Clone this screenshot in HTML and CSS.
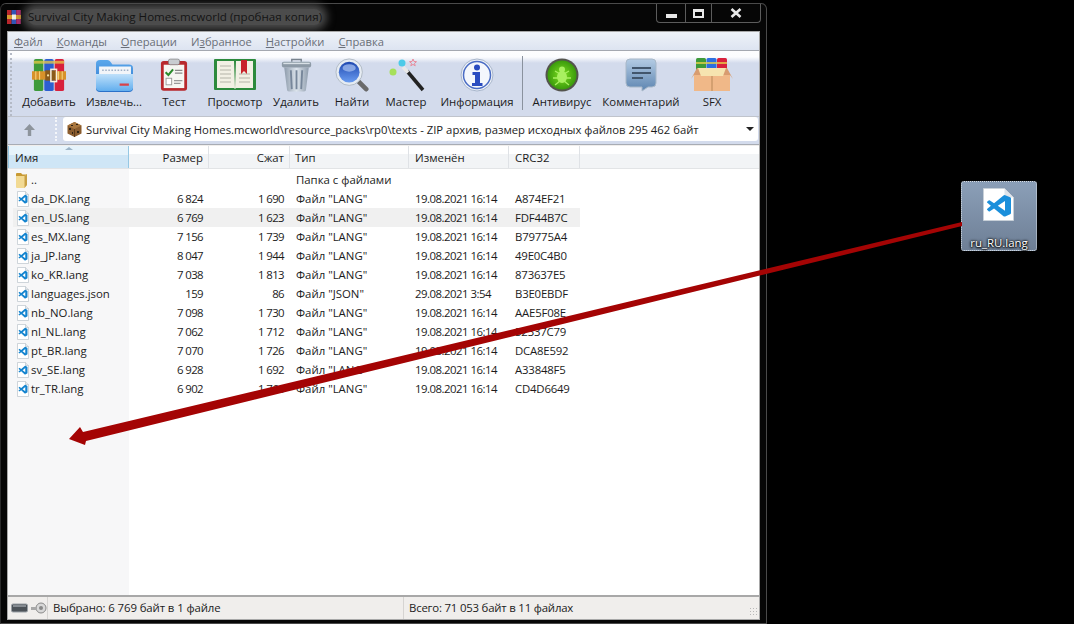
FILE: index.html
```html
<!DOCTYPE html>
<html lang="ru">
<head>
  <meta charset="UTF-8" />
  <title>Survival City Making Homes.mcworld</title>
  <link rel="stylesheet" href="styles.css">
</head>
<body>
  <svg width="0" height="0" class="defs">
    <defs>
      <linearGradient id="g-folder-back" x1="0" y1="0" x2="0" y2="1"><stop offset="0" stop-color="#5aa8ec"/><stop offset="1" stop-color="#2a70c8"/></linearGradient>
      <linearGradient id="g-folder-front" x1="0" y1="0" x2="0" y2="1"><stop offset="0" stop-color="#bfe0fa"/><stop offset="1" stop-color="#62aeee"/></linearGradient>
      <linearGradient id="g-lens" x1="0" y1="0" x2="0" y2="1"><stop offset="0" stop-color="#1f48b0"/><stop offset="1" stop-color="#6a9cf0"/></linearGradient>
      <linearGradient id="g-bubble" x1="0" y1="0" x2="0" y2="1"><stop offset="0" stop-color="#b4cce4"/><stop offset="1" stop-color="#5c84b0"/></linearGradient>
      <linearGradient id="g-trash" x1="0" y1="0" x2="1" y2="0"><stop offset="0" stop-color="#8e9cac"/><stop offset=".5" stop-color="#dce4ec"/><stop offset="1" stop-color="#8e9cac"/></linearGradient>
      <radialGradient id="g-virus"><stop offset="0" stop-color="#7ee020"/><stop offset="1" stop-color="#3a9a0c"/></radialGradient>
      <symbol id="vscode" viewBox="0 0 16 16">
        <path d="M2.500 .5h8L13.500 3.500v12h-11z" fill="#fff" stroke="#bcc4cc" stroke-width=".7"/>
        <path d="M10.500 .5v3h3" fill="#e4e8ec" stroke="#bcc4cc" stroke-width=".7"/>
        <path transform="translate(3.600 3.700) scale(.37)" d="M23.150 2.587 18.210.21a1.494 1.494 0 0 0-1.705.29l-9.460 8.630-4.120-3.128a.999.999 0 0 0-1.276.057L.327 7.261A1 1 0 0 0 .326 8.740L3.899 12 .326 15.260a1 1 0 0 0 .001 1.479L1.650 17.940a.999.999 0 0 0 1.276.057l4.120-3.128 9.460 8.630a1.492 1.492 0 0 0 1.704.29l4.942-2.377A1.500 1.500 0 0 0 24 20.060V3.939a1.500 1.500 0 0 0-.85-1.352zm-5.146 14.861L10.826 12l7.178-5.448v10.896z" fill="#1484cf"/>
      </symbol>
    </defs>
  </svg>

  <div class="window">
    <div class="titlebar">
      <svg class="app-icon" width="16" height="16" viewBox="0 0 16 16">
        <rect x="1" y="1" width="4.600" height="14" fill="#b8262c"/>
        <rect x="5.600" y="1" width="4.600" height="14" fill="#3156b8"/>
        <rect x="10.200" y="1" width="4.600" height="14" fill="#b02a6e"/>
        <rect x="1" y="6" width="14" height="4" fill="#d89a2e"/>
        <rect x="6" y="5.500" width="4" height="5" fill="#f4f0e0"/>
      </svg>
      <span class="title-text">Survival City Making Homes.mcworld (пробная копия)</span>
      <div class="caption-btns">
        <div class="cap-btn cap-min"><span class="min-glyph"></span></div>
        <div class="cap-btn cap-max"><span class="max-glyph"></span></div>
        <div class="cap-btn cap-close">
          <svg width="12" height="10" viewBox="0 0 12 10"><path d="M1.500 1l9 8M10.500 1l-9 8" stroke="#e8e8e8" stroke-width="2.600"/></svg>
        </div>
      </div>
    </div>

    <div class="client">
      <div class="menubar">
        <span><u>Ф</u>айл</span>
        <span><u>К</u>оманды</span>
        <span><u>О</u>перации</span>
        <span>И<u>з</u>бранное</span>
        <span><u>Н</u>астройки</span>
        <span><u>С</u>правка</span>
      </div>

      <div class="toolbar">
        <div class="tb-grip"></div>
        <div class="tool tool-add">
          <svg width="34" height="34" viewBox="0 0 36 36">
            <rect x="2" y="1" width="10" height="34" rx="2" fill="#3d9a3a"/>
            <rect x="13" y="1" width="10" height="34" rx="2" fill="#2c5fd0"/>
            <rect x="24" y="1" width="10" height="34" rx="2" fill="#d8203c"/>
            <rect x="2" y="3" width="32" height="3" fill="#e8c848" opacity=".75"/>
            <rect x="0" y="14" width="36" height="9" fill="#d8922a"/>
            <path d="M4 14v9M8 14v9M28 14v9M32 14v9" stroke="#f4cf7a" stroke-width="1.200"/>
            <rect x="14" y="13" width="11" height="11" fill="#8a5a1a"/>
            <rect x="20" y="12" width="6" height="13" fill="none" stroke="#f6f0e0" stroke-width="1.600"/>
            <circle cx="17" cy="18.500" r="1.200" fill="#f6e0a0"/>
          </svg>
          <span>Добавить</span>
        </div>
        <div class="tool tool-extract">
          <svg width="37" height="34" viewBox="0 0 36 36" preserveAspectRatio="none">
            <path d="M0 6q0-4 4-4h7q2 0 3 2l2 3h16q4 0 4 4v21q0 4-4 4H4q-4 0-4-4z" fill="url(#g-folder-back)"/>
            <rect x="3" y="9" width="31" height="9" fill="#f2f5f9"/>
            <path d="M6 13h26" stroke="#9fb0c6" stroke-width="1.400" stroke-dasharray="1.500 1.500"/>
            <path d="M0 17h36v14q0 4-4 4H4q-4 0-4-4z" fill="url(#g-folder-front)"/>
            <rect x="23" y="27" width="9" height="2.400" fill="#d8434a"/>
          </svg>
          <span>Извлечь...</span>
        </div>
        <div class="tool tool-test">
          <svg width="28" height="34" viewBox="0 0 30 36">
            <rect x="1" y="3" width="28" height="32" rx="3" fill="#b8282c"/>
            <rect x="4" y="7" width="22" height="25" fill="#f6f6f2"/>
            <rect x="9" y="1" width="12" height="6" rx="2" fill="#c8ccd0" stroke="#777" stroke-width=".7"/>
            <path d="M6 15l3 3 5-6" fill="none" stroke="#2a8a2c" stroke-width="2.200"/>
            <path d="M16 13h8M16 16h8" stroke="#888" stroke-width="1.200"/>
            <rect x="6.500" y="21.500" width="6" height="7" fill="#fff" stroke="#999"/>
            <path d="M15 24h9M15 27h7" stroke="#999" stroke-width="1.200"/>
          </svg>
          <span>Тест</span>
        </div>
        <div class="tool tool-view">
          <svg width="42" height="34" viewBox="0 0 42 34">
            <rect x="0" y="1" width="42" height="31" rx="1" fill="#2c8a3c"/>
            <path d="M3 3h17l1 28-1-1H3zM39 3H22l-1 28 1-1h17z" fill="#f2f0e4"/>
            <path d="M6 8h11M6 12h11M6 16h11M6 20h11M6 24h11M25 16h11M25 20h11M25 24h11" stroke="#b4b4a8" stroke-width="1.200"/>
            <path d="M27 2h6v14l-3-3-3 3z" fill="#c8242c"/>
          </svg>
          <span>Просмотр</span>
        </div>
        <div class="tool tool-del">
          <svg width="31" height="34" viewBox="0 0 32 36">
            <path d="M11 4V1.500h10V4" fill="none" stroke="#78838e" stroke-width="1.500"/>
            <path d="M3 10l3 24q0 1.500 2 1.500h16q2 0 2-1.500l3-24z" fill="url(#g-trash)"/>
            <path d="M10 13l1 20M16 13v20M22 13l-1 20" stroke="#76869a" stroke-width="2"/>
            <rect x="0.500" y="4" width="31" height="6" rx="2" fill="#8d9aa6"/>
            <rect x="2" y="5" width="28" height="1.500" fill="#d8e0e6"/>
          </svg>
          <span>Удалить</span>
        </div>
        <div class="tool tool-find">
          <svg width="36" height="34" viewBox="0 0 36 36">
            <path d="M24 24l9 9" stroke="#6a6a6a" stroke-width="5" stroke-linecap="round"/>
            <circle cx="15" cy="15" r="14" fill="#e6ecf2" stroke="#aeb8c4"/>
            <circle cx="15" cy="15" r="11" fill="url(#g-lens)"/>
            <ellipse cx="15" cy="10.500" rx="7" ry="4" fill="#9cb8ec" opacity=".8"/>
          </svg>
          <span>Найти</span>
        </div>
        <div class="tool tool-wiz">
          <svg width="38" height="34" viewBox="0 0 38 34">
            <path d="M20 13l16 19" stroke="#222" stroke-width="3.500"/>
            <path d="M16 9l5 5.500" stroke="#e8e8e8" stroke-width="3.500"/>
            <circle cx="6" cy="14" r="3.500" fill="#a6e05a"/>
            <circle cx="15" cy="5" r="3.500" fill="#4ccae8"/>
            <path d="M26 1l1 2.500 2.500.2-2 1.600.7 2.500-2.200-1.400-2.200 1.400.7-2.500-2-1.600 2.500-.2z" fill="none" stroke="#e88a9a"/>
          </svg>
          <span>Мастер</span>
        </div>
        <div class="tool tool-info">
          <svg width="34" height="34" viewBox="0 0 34 34">
            <circle cx="17" cy="17" r="16" fill="#eef2f8" stroke="#a8b6cc"/>
            <circle cx="17" cy="17" r="13.500" fill="#f4f7fc" stroke="#4a6cc4" stroke-width="1.500"/>
            <circle cx="17" cy="9.500" r="3" fill="#2a4cc0"/>
            <path d="M12.500 14h7.500v11h2.500v3H12v-3h3v-8h-2.500z" fill="#2a4cc0"/>
          </svg>
          <span>Информация</span>
        </div>
        <div class="tool-sep"></div>
        <div class="tool tool-av">
          <svg width="34" height="34" viewBox="0 0 34 34">
            <circle cx="17" cy="17" r="16.500" fill="#54544e"/>
            <circle cx="17" cy="17" r="14.500" fill="url(#g-virus)"/>
            <ellipse cx="17" cy="19" rx="5" ry="6" fill="#a8f060"/>
            <circle cx="17" cy="11.500" r="3" fill="#a8f060"/>
            <path d="M10 13l5 3M24 13l-5 3M8 20h6M26 20h-6M10 27l5-4M24 27l-5-4" stroke="#a8f060" stroke-width="1.300"/>
          </svg>
          <span>Антивирус</span>
        </div>
        <div class="tool tool-comment">
          <svg width="32" height="34" viewBox="0 0 32 34">
            <path d="M5 1h22q4 0 4 4v20q0 4-4 4h-4l-6 4v-4H5q-4 0-4-4V5q0-4 4-4z" fill="url(#g-bubble)" stroke="#a8b8c8"/>
            <path d="M7 10h19M7 15h19M7 20h11" stroke="#42566c" stroke-width="1.800"/>
          </svg>
          <span>Комментарий</span>
        </div>
        <div class="tool tool-sfx">
          <svg width="42" height="34" viewBox="0 0 42 34">
            <rect x="5" y="0" width="10" height="16" rx="1.500" fill="#3d9a3a"/>
            <rect x="15.500" y="0" width="10" height="16" rx="1.500" fill="#2c6fe0"/>
            <rect x="26" y="0" width="10" height="16" rx="1.500" fill="#d8203c"/>
            <path d="M5 5h31" stroke="#e8d048" stroke-width="1.500"/>
            <path d="M3 16h36v17H3z" fill="#f0b888"/>
            <path d="M0 21L6 10h30l6 11-3-4H3z" fill="#d89c70"/>
            <path d="M7 10h28l-3 8H10z" fill="#f6e4b0"/>
            <path d="M21 18v15" stroke="#b88858"/>
          </svg>
          <span>SFX</span>
        </div>
      </div>

      <div class="addressbar">
        <svg class="up-arrow" width="13" height="14" viewBox="0 0 13 14"><path d="M6.500 1L12 7H8.200v6H4.800V7H1z" fill="#8d949c"/></svg>
        <div class="grip"></div>
        <div class="address-box">
          <svg width="17" height="17" viewBox="0 0 17 17">
            <path d="M8.500 1l7 3.500v8l-7 3.500-7-3.500v-8z" fill="#8a5c2e"/>
            <path d="M8.500 1l7 3.500-7 3.500-7-3.500z" fill="#a8763e"/>
            <path d="M5 4h2v1H5zM10 3h2v1h-2zM3 7h2v2H3zM11 10h2v2h-2zM6 11h1v2H6z" fill="#2e2214"/>
            <path d="M8.500 8v8" stroke="#5c3c1c"/>
          </svg>
          <span class="address-text">Survival City Making Homes.mcworld\resource_packs\rp0\texts - ZIP архив, размер исходных файлов 295 462 байт</span>
          <span class="combo-arrow"></span>
        </div>
      </div>

      <div class="list">
        <div class="list-head">
          <div class="col-h col-name"><span class="sort-mark"></span>Имя</div>
          <div class="col-h col-size">Размер</div>
          <div class="col-h col-packed">Сжат</div>
          <div class="col-h col-type">Тип</div>
          <div class="col-h col-date">Изменён</div>
          <div class="col-h col-crc">CRC32</div>
          <div class="col-h col-rest"></div>
        </div>
        <div class="list-body">
          <div class="row">
            <div class="cell c-name">
              <svg class="file-ico" width="16" height="16" viewBox="0 0 16 16">
                <path d="M1 2q0-1 1-1h4l1.500 1.500H12v10H2q-1 0-1-1z" fill="#c89a34"/>
                <path d="M1 4h8.500L12 2v11l-2.500 3H2q-1 0-1-1z" fill="#f2da94"/>
                <path d="M9.500 4L12 2v11l-2.500 3z" fill="#c8a044"/>
              </svg>..
            </div>
            <div class="cell c-size"></div><div class="cell c-packed"></div>
            <div class="cell c-type">Папка с файлами</div><div class="cell c-date"></div><div class="cell c-crc"></div>
          </div>
          <div class="row">
            <div class="cell c-name"><svg class="file-ico" width="16" height="16"><use href="#vscode"/></svg>da_DK.lang</div>
            <div class="cell c-size">6 824</div><div class="cell c-packed">1 690</div>
            <div class="cell c-type">Файл "LANG"</div><div class="cell c-date">19.08.2021 16:14</div><div class="cell c-crc">A874EF21</div>
          </div>
          <div class="row row-sel">
            <div class="cell c-name"><svg class="file-ico" width="16" height="16"><use href="#vscode"/></svg>en_US.lang</div>
            <div class="cell c-size">6 769</div><div class="cell c-packed">1 623</div>
            <div class="cell c-type">Файл "LANG"</div><div class="cell c-date">19.08.2021 16:14</div><div class="cell c-crc">FDF44B7C</div>
          </div>
          <div class="row">
            <div class="cell c-name"><svg class="file-ico" width="16" height="16"><use href="#vscode"/></svg>es_MX.lang</div>
            <div class="cell c-size">7 156</div><div class="cell c-packed">1 739</div>
            <div class="cell c-type">Файл "LANG"</div><div class="cell c-date">19.08.2021 16:14</div><div class="cell c-crc">B79775A4</div>
          </div>
          <div class="row">
            <div class="cell c-name"><svg class="file-ico" width="16" height="16"><use href="#vscode"/></svg>ja_JP.lang</div>
            <div class="cell c-size">8 047</div><div class="cell c-packed">1 944</div>
            <div class="cell c-type">Файл "LANG"</div><div class="cell c-date">19.08.2021 16:14</div><div class="cell c-crc">49E0C4B0</div>
          </div>
          <div class="row">
            <div class="cell c-name"><svg class="file-ico" width="16" height="16"><use href="#vscode"/></svg>ko_KR.lang</div>
            <div class="cell c-size">7 038</div><div class="cell c-packed">1 813</div>
            <div class="cell c-type">Файл "LANG"</div><div class="cell c-date">19.08.2021 16:14</div><div class="cell c-crc">873637E5</div>
          </div>
          <div class="row">
            <div class="cell c-name"><svg class="file-ico" width="16" height="16"><use href="#vscode"/></svg>languages.json</div>
            <div class="cell c-size">159</div><div class="cell c-packed">86</div>
            <div class="cell c-type">Файл "JSON"</div><div class="cell c-date">29.08.2021 3:54</div><div class="cell c-crc">B3E0EBDF</div>
          </div>
          <div class="row">
            <div class="cell c-name"><svg class="file-ico" width="16" height="16"><use href="#vscode"/></svg>nb_NO.lang</div>
            <div class="cell c-size">7 098</div><div class="cell c-packed">1 730</div>
            <div class="cell c-type">Файл "LANG"</div><div class="cell c-date">19.08.2021 16:14</div><div class="cell c-crc">AAE5F08E</div>
          </div>
          <div class="row">
            <div class="cell c-name"><svg class="file-ico" width="16" height="16"><use href="#vscode"/></svg>nl_NL.lang</div>
            <div class="cell c-size">7 062</div><div class="cell c-packed">1 712</div>
            <div class="cell c-type">Файл "LANG"</div><div class="cell c-date">19.08.2021 16:14</div><div class="cell c-crc">52337C79</div>
          </div>
          <div class="row">
            <div class="cell c-name"><svg class="file-ico" width="16" height="16"><use href="#vscode"/></svg>pt_BR.lang</div>
            <div class="cell c-size">7 070</div><div class="cell c-packed">1 726</div>
            <div class="cell c-type">Файл "LANG"</div><div class="cell c-date">19.08.2021 16:14</div><div class="cell c-crc">DCA8E592</div>
          </div>
          <div class="row">
            <div class="cell c-name"><svg class="file-ico" width="16" height="16"><use href="#vscode"/></svg>sv_SE.lang</div>
            <div class="cell c-size">6 928</div><div class="cell c-packed">1 692</div>
            <div class="cell c-type">Файл "LANG"</div><div class="cell c-date">19.08.2021 16:14</div><div class="cell c-crc">A33848F5</div>
          </div>
          <div class="row">
            <div class="cell c-name"><svg class="file-ico" width="16" height="16"><use href="#vscode"/></svg>tr_TR.lang</div>
            <div class="cell c-size">6 902</div><div class="cell c-packed">1 764</div>
            <div class="cell c-type">Файл "LANG"</div><div class="cell c-date">19.08.2021 16:14</div><div class="cell c-crc">CD4D6649</div>
          </div>
        </div>
      </div>

      <div class="statusbar">
        <div class="st-icons">
          <svg width="36" height="12" viewBox="0 0 36 12">
            <rect x="0.500" y="2" width="16" height="8" rx="1.500" fill="#4c5258" stroke="#9aa0a6"/>
            <rect x="2" y="3" width="13" height="2" fill="#868c92"/>
            <circle cx="30" cy="6" r="5" fill="#d8d8d8" stroke="#8a8a8a"/>
            <circle cx="30" cy="6" r="2" fill="#888"/>
            <path d="M20 5h6v3h-6z" fill="#a8a8a8"/>
          </svg>
        </div>
        <div class="st-left">Выбрано: 6 769 байт в 1 файле</div>
        <div class="st-right">Всего: 71 053 байт в 11 файлах</div>
        <div class="st-grip"></div>
      </div>
    </div>
  </div>

  <div class="desk-icon">
    <svg class="desk-file" width="31" height="33" viewBox="0 0 31 33">
      <path d="M.5.500h21l9 9v23H.5z" fill="#fff" stroke="#c8d0d8"/>
      <path d="M21.500.500v9h9z" fill="#dfe4ea"/>
      <path transform="translate(4 7) scale(1 .9)" d="M23.150 2.587 18.210.21a1.494 1.494 0 0 0-1.705.29l-9.460 8.630-4.120-3.128a.999.999 0 0 0-1.276.057L.327 7.261A1 1 0 0 0 .326 8.740L3.899 12 .326 15.260a1 1 0 0 0 .001 1.479L1.650 17.940a.999.999 0 0 0 1.276.057l4.120-3.128 9.460 8.630a1.492 1.492 0 0 0 1.704.29l4.942-2.377A1.500 1.500 0 0 0 24 20.060V3.939a1.500 1.500 0 0 0-.85-1.352zm-5.146 14.861L10.826 12l7.178-5.448v10.896z" fill="#1a8fdb"/>
    </svg>
    <span class="desk-label">ru_RU.lang</span>
  </div>

  <svg class="red-arrow" width="1074" height="624" viewBox="0 0 1074 624">
    <polygon points="69,439 80,427 83,432 962,222 962,226 86,441 85,445" fill="#a40404"/>
  </svg>
</body>
</html>
```

FILE: styles.css
```css
* {
  box-sizing: border-box;
}

html, body {
  margin: 0;
  height: 624px;
  overflow: hidden;
  background: #000;
}

body {
  position: relative;
  font-family: "Open Sans", "Noto Sans", sans-serif;
  font-size: 11.4px;
  color: #1c1c1c;
}

.defs {
  position: absolute;
}

/* window */
.window {
  width: 767px;
  height: 621px;
  margin-top: 3px;
  padding: 0 6px 3px 6px;
  display: flex;
  flex-direction: column;
  background: #060606;
  border: 1px solid #4a4a4a;
  border-left-color: #2a2a2a;
  border-radius: 6px 6px 0 0;
}

.titlebar {
  height: 27px;
  flex: none;
  display: flex;
  align-items: flex-start;
  gap: 6px;
  margin-left: -1px;
  padding-top: 5px;
}

.app-icon {
  flex: none;
}

.title-text {
  font-size: 11.6px;
  line-height: 16px;
  color: #141414;
  background: #4c4c4c;
  box-shadow: 0 0 8px 5px #4c4c4c;
  border-radius: 8px;
}

.caption-btns {
  margin-left: auto;
  margin-top: -5px;
  margin-right: -1px;
  display: flex;
  height: 19px;
  border: 1px solid #5c5c5c;
  border-top: none;
  border-radius: 0 0 4px 4px;
}

.cap-btn {
  display: flex;
  align-items: center;
  justify-content: center;
  border-right: 1px solid #5c5c5c;
}

.cap-min { width: 29px; }
.cap-max { width: 26px; }
.cap-close { width: 48px; border-right: none; }

.min-glyph {
  width: 11px;
  height: 4px;
  margin-top: 6px;
  background: #e8e8e8;
}

.max-glyph {
  width: 11px;
  height: 9px;
  border: 2px solid #e8e8e8;
  border-top-width: 3px;
}

.client {
  flex: 1;
  display: flex;
  flex-direction: column;
  background: #f0eeec;
  border: 1px solid #a8a8a8;
}

/* menu */
.menubar {
  height: 19px;
  flex: none;
  display: flex;
  gap: 14px;
  padding-left: 6px;
  align-items: center;
  font-size: 11.2px;
  color: #6a6f78;
  background: linear-gradient(#eef2f8, #dde4f1);
  border-bottom: 1px solid #a4a8b0;
}

/* toolbar */
.toolbar {
  height: 66px;
  flex: none;
  display: flex;
  background: linear-gradient(#fdfdfe 0, #fbfcfe 6px, #d3dbec 12px, #d3dbec 100%);
  border-bottom: 1px solid #c0c4cc;
  padding-left: 2px;
}

.tb-grip {
  width: 2px;
  margin: 2px 4px 0 0;
  border-left: 2px dotted #b4bac6;
}

.tool {
  display: flex;
  flex-direction: column;
  align-items: center;
  padding-top: 7px;
}

.tool svg {
  flex: none;
}

.tool span {
  margin-top: 2px;
  line-height: 16px;
  white-space: nowrap;
}

.tool-add { width: 66px; }
.tool-extract { width: 64px; }
.tool-test { width: 56px; }
.tool-view { width: 66px; }
.tool-del { width: 56px; }
.tool-find { width: 56px; }
.tool-wiz { width: 52px; }
.tool-info { width: 90px; }
.tool-av { width: 70px; }
.tool-comment { width: 88px; }
.tool-sfx { width: 54px; }

.tool-sep {
  width: 1px;
  height: 54px;
  margin: 5px 4px 0 0;
  background: #8a929e;
}

/* address */
.addressbar {
  height: 28px;
  flex: none;
  display: flex;
  align-items: flex-start;
  background: #d3dbec;
  border-bottom: 1px solid #a8acb4;
  padding-right: 1px;
}

.up-arrow {
  margin: 6px 0 0 15px;
  flex: none;
}

.grip {
  width: 3px;
  height: 24px;
  margin-left: 19px;
  border-left: 2px dotted #f4f6fa;
}

.address-box {
  flex: 1;
  height: 24px;
  display: flex;
  align-items: center;
  gap: 3px;
  padding-left: 3px;
  background: #fff;
  border-radius: 3px;
  margin-left: 5px;
}

.address-box svg {
  flex: none;
}

.address-text {
  font-size: 11.3px;
  white-space: nowrap;
}

.combo-arrow {
  margin-left: auto;
  margin-right: 4px;
  width: 0;
  height: 0;
  border-left: 4px solid transparent;
  border-right: 4px solid transparent;
  border-top: 4px solid #222;
}

/* list */
.list {
  flex: 1;
  min-height: 0;
  display: flex;
  flex-direction: column;
  background: #fff;
  border-bottom: 2px solid #a8a8a8;
  margin-top: 1px;
}

.list-head {
  height: 23px;
  flex: none;
  display: flex;
  background: linear-gradient(#fff 0, #fff 35%, #f2f4f6 36%, #f2f4f6 100%);
  border-bottom: 1px solid #e2e4e6;
}

.col-h {
  position: relative;
  line-height: 24px;
  padding: 0 5px 0 6px;
  border-right: 1px solid #dfe2e6;
}

.col-name {
  background: linear-gradient(#e6f3fb 0, #e6f3fb 40%, #cfe6f6 41%, #cfe6f6 100%);
  border: 1px solid #96c8e4;
  border-width: 0 1px 0 1px;
}

.sort-mark {
  position: absolute;
  left: 56px;
  top: 1px;
  border-left: 4px solid transparent;
  border-right: 4px solid transparent;
  border-bottom: 3px solid #9cb4c8;
}

.col-name, .c-name { width: 121px; }
.col-size, .c-size { width: 80px; }
.col-packed, .c-packed { width: 81px; }
.col-type, .c-type { width: 119px; }
.col-date, .c-date { width: 100px; }
.col-crc, .c-crc { width: 71px; }

.col-size, .col-packed, .c-size, .c-packed {
  text-align: right;
}

.col-type, .c-type {
  padding-left: 5px;
}

.col-rest {
  flex: 1;
  border-right: none;
}

.list-body {
  flex: 1;
  padding-top: 1px;
  background: linear-gradient(90deg, #f7f7f8 0, #f7f7f8 121px, #fff 121px);
}

.row {
  height: 19px;
  width: 572px;
  display: flex;
  align-items: center;
}

.row-sel {
  background: linear-gradient(90deg, transparent 0, transparent 5px, #f0f0f0 5px);
}

.cell {
  padding: 0 6px;
  line-height: 19px;
  white-space: nowrap;
}

.c-name {
  display: flex;
  align-items: center;
  padding-left: 7px;
}

.c-size, .c-packed {
  letter-spacing: -.6px;
}

.c-date {
  letter-spacing: -.5px;
}

.c-crc {
  letter-spacing: -.2px;
}

.file-ico {
  flex: none;
}

/* status */
.statusbar {
  height: 22px;
  flex: none;
  display: flex;
  align-items: center;
  background: #f0eeec;
}

.st-icons {
  width: 40px;
  height: 100%;
  display: flex;
  align-items: center;
  padding-left: 3px;
  border-right: 1px solid #d6d4d2;
}

.st-left {
  width: 356px;
  height: 100%;
  line-height: 22px;
  padding-left: 5px;
  letter-spacing: -.1px;
  border-right: 1px solid #d6d4d2;
}

.st-right {
  padding-left: 5px;
  line-height: 22px;
  letter-spacing: -.2px;
}

.st-grip {
  margin-left: auto;
  margin-top: 8px;
  width: 10px;
  height: 10px;
  background: radial-gradient(#b8b8b8 1px, transparent 1px) 0 0 / 3px 3px;
}

/* desktop */
.desk-icon {
  position: absolute;
  left: 961px;
  top: 181px;
  width: 76px;
  height: 70px;
  display: flex;
  flex-direction: column;
  align-items: center;
  padding-top: 6px;
  background: linear-gradient(#8b9fb8, #6e7f96);
  border: 1px dotted #d8dde4;
  border-radius: 3px;
}

.desk-file {
  flex: none;
  margin-right: 2px;
}

.desk-label {
  margin-top: 14px;
  color: #fff;
  font-size: 11.4px;
  line-height: 15px;
  text-shadow: 0 0 2px #000, 0 1px 2px #000, 0 0 3px #000;
}

.red-arrow {
  position: absolute;
  left: 0;
  top: 0;
  pointer-events: none;
}
```
